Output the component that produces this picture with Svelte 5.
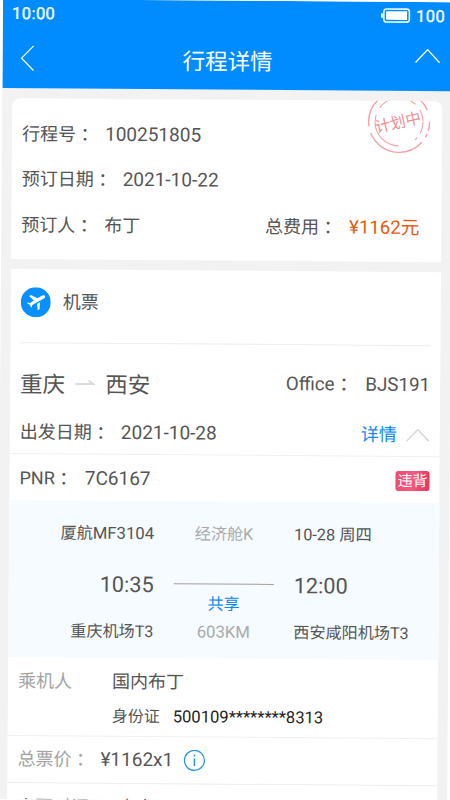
<script>
  const trip = {
    id: '100251805',
    bookedOn: '2021-10-22',
    bookedBy: '布丁',
    total: '¥1162元',
    status: '计划中'
  };

  const flight = {
    from: '重庆',
    to: '西安',
    office: 'BJS191',
    date: '2021-10-28',
    pnr: '7C6167',
    airline: '厦航',
    number: 'MF3104',
    cabin: '经济舱K',
    arriveDay: '10-28 周四',
    depart: '10:35',
    arrive: '12:00',
    share: '共享',
    fromAirport: '重庆机场T3',
    distance: '603KM',
    toAirport: '西安咸阳机场T3'
  };

  const passenger = {
    name: '国内布丁',
    idType: '身份证',
    idNumber: '500109********8313',
    price: '¥1162x1'
  };

  let expanded = true;
</script>

<div class="screen">
  <header>
    <div class="status-bar">
      <span>10:00</span>
      <div class="battery">
        <svg width="30" height="16" viewBox="0 0 30 16">
          <rect x="3" y="1.2" width="25.5" height="13" rx="2.6" fill="none" stroke="#e9fbff" stroke-width="1.6" />
          <rect x="5.2" y="3.4" width="21" height="8.6" fill="#fff" />
          <path d="M1 5.5v4.4" stroke="#e9fbff" stroke-width="2" />
        </svg>
        <span>100</span>
      </div>
    </div>
    <div class="nav-bar">
      <button class="back" aria-label="返回">
        <svg width="14" height="26" viewBox="0 0 14 26">
          <path d="M13 0.7L1 13l12 12.3" fill="none" stroke="#fff" stroke-width="1.2" />
        </svg>
      </button>
      <h1>行程详情</h1>
      <button class="home" aria-label="收起">
        <svg width="26" height="16" viewBox="0 0 26 16">
          <path d="M1 14.5L13 1.5l12 13" fill="none" stroke="#fff" stroke-width="1.3" />
        </svg>
      </button>
    </div>
  </header>

  <section class="card summary">
    <div class="row">
      <span class="label">行程号<i>：</i></span><span class="num">{trip.id}</span>
    </div>
    <div class="row">
      <span class="label">预订日期<i>：</i></span><span class="num">{trip.bookedOn}</span>
    </div>
    <div class="row">
      <span class="label">预订人<i>：</i></span><span>{trip.bookedBy}</span>
      <div class="total">
        <span class="label">总费用<i>：</i></span><span class="cost">{trip.total}</span>
      </div>
    </div>
    <div class="stamp">
      <svg width="64" height="64" viewBox="0 0 64 64" fill="none" stroke="#f3a3a8">
        <circle cx="32" cy="32" r="30.5" stroke-width="1.4" stroke-dasharray="9 3 4 6 62 7 30 3 14 5 36 12" />
        <circle cx="32" cy="32" r="24" stroke-width="1.1" stroke-dasharray="12 5 3 18 44 8 24 6 10 7" />
      </svg>
      <span>{trip.status}</span>
    </div>
  </section>

  <section class="card ticket">
    <div class="ticket-title">
      <svg width="30" height="30" viewBox="0 0 30 30">
        <circle cx="15" cy="15" r="15" fill="#0a8fff" />
        <path
          d="M23.900 8.500c-.8-.8-2.300-.4-3.300.2L16.600 11 10.200 7.700 8.300 8.700l4.700 4.500-3.600 2.500-2.300-.4-.9.800 2.900 1.500 1.100 2.600 1-.5.300-2 12-6.800c.9-.7 1.100-1.700.4-2.400z"
          fill="#fff"
        />
        <path d="M16.200 16.700l3-1.700-.4 7-1.700 1.100z" fill="#fff" />
      </svg>
      <span>机票</span>
    </div>

    <div class="route">
      <span class="city">{flight.from}</span>
      <svg width="20" height="10" viewBox="0 0 20 10">
        <path d="M0 5.400h18L13.500 2" fill="none" stroke="#dadada" stroke-width="2" />
      </svg>
      <span class="city">{flight.to}</span>
      <div class="office">
        <span class="label">Office<i>：</i></span><span>{flight.office}</span>
      </div>
    </div>

    <div class="row date">
      <span class="label">出发日期<i>：</i></span><span class="num">{flight.date}</span>
      <button class="toggle" on:click={() => (expanded = !expanded)}>
        详情
        <svg class:closed={!expanded} width="24" height="14" viewBox="0 0 24 14">
          <path d="M1 13L12 1.500 23 13" fill="none" stroke="#d6d6d6" stroke-width="1.500" />
        </svg>
      </button>
    </div>

    {#if expanded}
      <div class="row pnr">
        <span class="label">PNR<i>：</i></span><span class="num">{flight.pnr}</span>
        <span class="badge">违背</span>
      </div>

      <div class="flight">
        <span class="start">{flight.airline}<b>{flight.number}</b></span>
        <span class="mid">{flight.cabin}</span>
        <span class="day">{flight.arriveDay}</span>

        <span class="start time">{flight.depart}</span>
        <div class="share">
          <hr />
          <span>{flight.share}</span>
        </div>
        <span class="time">{flight.arrive}</span>

        <span class="start">{flight.fromAirport}</span>
        <span class="mid distance">{flight.distance}</span>
        <span>{flight.toAirport}</span>
      </div>

      <div class="passenger">
        <span class="muted">乘机人</span>
        <div>
          <p>{passenger.name}</p>
          <p class="id">{passenger.idType}<b>{passenger.idNumber}</b></p>
        </div>
      </div>

      <div class="row price">
        <span class="label muted">总票价<i>：</i></span><span class="num">{passenger.price}</span>
        <svg width="22" height="22" viewBox="0 0 22 22">
          <circle cx="11" cy="11" r="10" fill="none" stroke="#2a95e4" stroke-width="1.300" />
          <path d="M11 9v7.500M11 5.200v1.900" stroke="#2a95e4" stroke-width="1.500" />
        </svg>
      </div>

      <div class="row issued">
        <span class="label">出票时间<i>：</i></span><span>未出</span>
      </div>
    {/if}
  </section>
</div>

<style>
  :global(body) {
    background: #fff;
    overflow: hidden;
  }

  :global(#app) {
    height: 800px;
    overflow: hidden;
  }

  .screen {
    width: 450px;
    height: 800px;
    margin: -1px 0 0 3px;
    overflow: hidden;
    display: flex;
    flex-direction: column;
    background: #f2f2f2;
    color: #555;
    font-family: Roboto, 'Noto Sans CJK SC', sans-serif;
    font-size: 18px;
    line-height: 24px;
    transform: rotate(0.42deg);
    transform-origin: 0 0;
  }

  button {
    padding: 0;
    border: 0;
    background: none;
    font: inherit;
    line-height: 0;
    cursor: pointer;
  }

  header {
    flex: none;
    height: 89px;
    background: #008cff;
    color: #fff;
  }

  .status-bar {
    display: flex;
    align-items: center;
    justify-content: space-between;
    height: 27px;
    padding: 0 8px 0 9px;
    font-size: 17px;
    font-weight: 500;
    color: #e9fbff;
  }

  .battery {
    display: flex;
    align-items: center;
    gap: 5px;
  }

  .nav-bar {
    display: grid;
    grid-template-columns: 60px 1fr 60px;
    align-items: center;
    height: 66px;
  }

  .back {
    justify-self: start;
    margin: 0 0 2px 18px;
  }

  .home {
    justify-self: end;
    margin: 0 12px 13px 0;
  }

  h1 {
    margin: 1px 0 0;
    font-size: 22.5px;
    font-weight: 400;
    line-height: 30px;
    text-align: center;
  }

  .card {
    flex: none;
    margin: 10px 10px 0;
    background: #fff;
    border-radius: 8px 8px 0 0;
  }

  .summary {
    position: relative;
    height: 161px;
    padding: 13px 0 0;
    box-sizing: border-box;
    overflow: hidden;
  }

  .row {
    display: flex;
    align-items: center;
    height: 46px;
    padding: 0 10px;
    box-sizing: border-box;
  }

  .summary .row {
    height: 45.6px;
  }

  .label {
    margin-right: 11px;
  }

  .label i {
    font-family: 'Noto Sans CJK TC', sans-serif;
    font-style: normal;
    line-height: 20px;
    vertical-align: -1px;
  }

  .num {
    font-size: 19px;
  }

  .total {
    margin-left: auto;
    padding-right: 12px;
  }

  .cost {
    margin-left: 1px;
    font-size: 18.6px;
    color: #e8590c;
  }

  .stamp {
    position: absolute;
    top: -11px;
    right: 11px;
    width: 64px;
    height: 64px;
  }

  .stamp svg {
    display: block;
  }

  .stamp span {
    position: absolute;
    top: 21px;
    left: 7px;
    width: 48px;
    font-size: 15.5px;
    text-align: center;
    color: #ee8f95;
    transform: rotate(-13deg);
  }

  .ticket {
    height: 540px;
    border-radius: 0;
  }

  .ticket-title {
    display: flex;
    align-items: center;
    gap: 12px;
    height: 74px;
    margin: 0 10px;
    padding-bottom: 8px;
    box-sizing: border-box;
    border-bottom: 1px solid #ececec;
  }

  .route {
    display: flex;
    align-items: center;
    gap: 10px;
    height: 66px;
    padding: 15px 10px 0;
    box-sizing: border-box;
  }

  .route svg {
    margin-bottom: 2px;
  }

  .city {
    font-size: 22.5px;
    line-height: 30px;
  }

  .office {
    margin: 0 0 3px auto;
    font-size: 18.8px;
  }

  .office .label {
    margin-right: 12px;
  }

  .date {
    height: 45px;
    padding-top: 1px;
    border-bottom: 1px solid #f0f0f0;
  }

  .toggle {
    display: flex;
    align-items: center;
    gap: 9px;
    margin-left: auto;
    line-height: 24px;
    color: #1288ea;
  }

  .closed {
    transform: rotate(180deg);
  }

  .pnr {
    padding-top: 2px;
  }

  .pnr .label {
    margin-right: 12px;
  }

  .badge {
    width: 34px;
    height: 20px;
    margin-left: auto;
    border-radius: 3px;
    background: linear-gradient(100deg, #f0486e, #f25a80 50%, #ee2f56);
    color: #fff;
    font-size: 15px;
    line-height: 20px;
    text-align: center;
  }

  .flight {
    display: grid;
    grid-template-columns: 145px 100px 1fr;
    grid-template-rows: 50px 51px 44px;
    column-gap: 20px;
    align-items: center;
    height: 157px;
    padding: 8px 0 4px;
    box-sizing: border-box;
    background: #f6fbff;
    font-size: 16.1px;
    white-space: nowrap;
  }

  .flight b {
    font-size: 16.7px;
    font-weight: 400;
  }

  .start {
    text-align: right;
  }

  .mid {
    text-align: center;
    color: #aaa;
  }

  .distance {
    font-size: 16.7px;
  }

  .day {
    font-size: 16.3px;
  }

  .time {
    font-size: 21.7px;
  }

  .share {
    color: #1288ea;
    text-align: center;
    padding-top: 29px;
  }

  .share hr {
    margin: 0 0 8px;
    border: 0;
    border-top: 1px solid #a39d9d;
  }

  .share span {
    display: block;
  }

  .passenger {
    display: flex;
    height: 79px;
    padding: 12px 10px 0;
    box-sizing: border-box;
    border-bottom: 1px solid #f0f0f0;
  }

  .passenger > span {
    width: 94px;
  }

  .passenger p {
    margin: 0 0 11px;
  }

  .passenger .id {
    font-size: 16px;
  }

  .id b {
    margin-left: 13px;
    font-size: 16.6px;
    font-weight: 400;
    color: #222;
  }

  .muted {
    color: #a3a3a3;
  }

  .price {
    height: 47px;
    border-bottom: 1px solid #ececec;
  }

  .price svg {
    margin-left: 10px;
  }

  .issued {
    padding-top: 2px;
  }
</style>
